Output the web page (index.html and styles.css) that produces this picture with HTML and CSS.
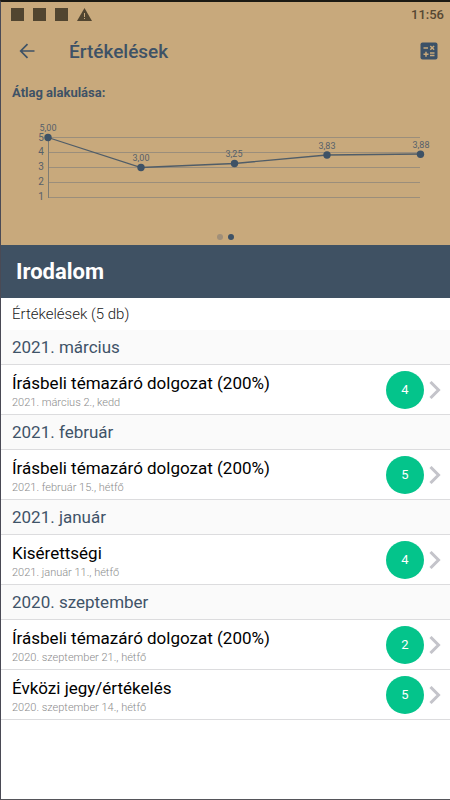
FILE: index.html
```html
<!DOCTYPE html>
<html lang="hu">
<head>
<meta charset="utf-8">
<meta name="viewport" content="width=device-width, initial-scale=1">
<title>Értékelések</title>
<link rel="stylesheet" href="styles.css">
</head>
<body>
<div class="screen">
  <header class="top">
    <div class="status">
      <div class="status-icons">
        <span class="square"></span>
        <span class="square"></span>
        <span class="square"></span>
        <svg class="warning" viewBox="0 0 15 13" aria-hidden="true">
          <path class="warning-shape" d="M7.500 0L15 13H0z"/>
          <path class="warning-mark" d="M7 5h1v4H7zM7 10h1v1H7z"/>
        </svg>
      </div>
      <time class="clock">11:56</time>
    </div>
    <div class="toolbar">
      <button class="icon-button" type="button" aria-label="Vissza">
        <svg class="back" viewBox="0 0 16 16" aria-hidden="true"><path d="M15.500 8H2M8.500 1.200L1.700 8L8.500 14.800"/></svg>
      </button>
      <h1 class="title">Értékelések</h1>
      <button class="icon-button" type="button" aria-label="Átlagszámítás">
        <svg class="calculator" viewBox="0 0 18 18" aria-hidden="true">
          <rect class="calc-body" x="0.500" y="0.500" width="17" height="17" rx="2"/>
          <path class="calc-signs" d="M3.500 6h4.500M10.300 4l3.800 3.800M14.100 4l-3.800 3.800M3.500 12.200h5M6 9.700v5M10 11h4.500M10 13.500h4.500"/>
        </svg>
      </button>
    </div>
    <h2 class="chart-title">Átlag alakulása:</h2>
    <svg class="chart" viewBox="0 0 449 100" role="img" aria-label="Átlag alakulása">
      <path class="grid" d="M47 27.500H419M47 42.500H419M47 57.500H419M47 72.500H419M47 87.500H419"/>
      <path class="axis" d="M47.500 27V88"/>
      <polyline class="line" points="47,27.500 140,57.500 233.500,53.500 326,45 419,44"/>
      <g class="points">
        <circle cx="47" cy="27.500" r="3.700"/><circle cx="140" cy="57.500" r="3.700"/><circle cx="233.500" cy="53.500" r="3.700"/><circle cx="326" cy="45" r="3.700"/><circle cx="419.500" cy="44.300" r="3.700"/>
      </g>
      <g class="ticks">
        <text x="40" y="31">5</text><text x="40" y="45">4</text><text x="40" y="60">3</text><text x="40" y="75">2</text><text x="40" y="90">1</text>
      </g>
      <g class="values">
        <text x="47" y="21">5,00</text><text x="140" y="51">3,00</text><text x="233" y="47">3,25</text><text x="326" y="39">3,83</text><text x="420" y="38">3,88</text>
      </g>
    </svg>
    <div class="pager">
      <span class="dot"></span>
      <span class="dot dot-active"></span>
    </div>
  </header>
  <main>
    <h2 class="subject">Irodalom</h2>
    <p class="count">Értékelések (5 db)</p>

    <h3 class="month">2021. március</h3>
    <a class="entry" href="#">
      <span class="entry-text"><span class="entry-name">Írásbeli témazáró dolgozat (200%)</span><span class="entry-date">2021. március 2., kedd</span></span>
      <span class="grade">4</span>
      <svg class="chevron" viewBox="0 0 12 18" aria-hidden="true"><path d="M1.500 1L9.500 9L1.500 17"/></svg>
    </a>

    <h3 class="month">2021. február</h3>
    <a class="entry" href="#">
      <span class="entry-text"><span class="entry-name">Írásbeli témazáró dolgozat (200%)</span><span class="entry-date">2021. február 15., hétfő</span></span>
      <span class="grade">5</span>
      <svg class="chevron" viewBox="0 0 12 18" aria-hidden="true"><path d="M1.500 1L9.500 9L1.500 17"/></svg>
    </a>

    <h3 class="month">2021. január</h3>
    <a class="entry" href="#">
      <span class="entry-text"><span class="entry-name">Kisérettségi</span><span class="entry-date">2021. január 11., hétfő</span></span>
      <span class="grade">4</span>
      <svg class="chevron" viewBox="0 0 12 18" aria-hidden="true"><path d="M1.500 1L9.500 9L1.500 17"/></svg>
    </a>

    <h3 class="month">2020. szeptember</h3>
    <a class="entry" href="#">
      <span class="entry-text"><span class="entry-name">Írásbeli témazáró dolgozat (200%)</span><span class="entry-date">2020. szeptember 21., hétfő</span></span>
      <span class="grade">2</span>
      <svg class="chevron" viewBox="0 0 12 18" aria-hidden="true"><path d="M1.500 1L9.500 9L1.500 17"/></svg>
    </a>
    <a class="entry" href="#">
      <span class="entry-text"><span class="entry-name">Évközi jegy/értékelés</span><span class="entry-date">2020. szeptember 14., hétfő</span></span>
      <span class="grade">5</span>
      <svg class="chevron" viewBox="0 0 12 18" aria-hidden="true"><path d="M1.500 1L9.500 9L1.500 17"/></svg>
    </a>
  </main>
</div>
</body>
</html>
```
FILE: styles.css
```css
* { box-sizing: border-box; }

body {
  margin: 0;
  background: #fff;
  color: #000;
  font-family: Roboto, "Liberation Sans", sans-serif;
}

h1, h2, h3, p { margin: 0; }

.screen {
  min-height: 100vh;
  border-top: 2px solid #1b1a14;
  border-left: 1px solid #4a4a55;
  border-bottom: 1px solid #55555a;
}

.top {
  background: #c8a97c;
  color: #3e5266;
}

.status {
  display: flex;
  align-items: center;
  justify-content: space-between;
  height: 24px;
  padding: 0 6px 0 10px;
  color: #564833;
}

.status-icons {
  display: flex;
  align-items: center;
  gap: 9px;
}

.square {
  width: 13px;
  height: 13px;
  background: #514530;
}

.warning { width: 15px; height: 13px; }
.warning-shape { fill: #514530; }
.warning-mark { fill: #c8a97c; }
.clock { font-size: 13px; font-weight: 500; }

.toolbar {
  display: flex;
  align-items: center;
  height: 50px;
  padding: 0 12px 0 18px;
}

.icon-button {
  display: flex;
  padding: 0;
  border: 0;
  background: none;
}

.back {
  width: 16px;
  height: 16px;
  fill: none;
  stroke: #3e5266;
  stroke-width: 1.7;
}

.title {
  flex: 1;
  padding-left: 34px;
  font-size: 19px;
  font-weight: 500;
}

.calculator { width: 18px; height: 18px; }
.calc-body { fill: #3b5167; }
.calc-signs { fill: none; stroke: #c8a97c; stroke-width: 1.5; }

.chart-title {
  padding: 8px 11px;
  font-size: 13px;
  line-height: 18px;
  font-weight: 700;
}

.chart { display: block; width: 100%; }
.grid { stroke: #9b8e7b; stroke-width: 1; }
.axis { stroke: #7e7c73; stroke-width: 1; }
.line { fill: none; stroke: #505d68; stroke-width: 1.3; }
.points { fill: #3e5266; }
.ticks, .values { fill: #56606a; text-anchor: middle; }
.ticks { font-size: 10px; }
.values { font-size: 9px; }

.pager {
  display: flex;
  justify-content: center;
  gap: 5px;
  padding: 24px 0 5px;
}

.dot {
  width: 6px;
  height: 6px;
  border-radius: 50%;
  background: #a08f79;
}

.dot-active { background: #3e5266; }

.subject {
  padding: 1px 15px 0;
  background: #3f5163;
  color: #fff;
  font-size: 22px;
  line-height: 52px;
  font-weight: 700;
}

.count {
  padding: 0 11px;
  color: #222;
  font-size: 15px;
  line-height: 32px;
  font-weight: 300;
}

.month {
  padding: 0 11px;
  border-bottom: 1px solid #dcdcde;
  background: #fafafa;
  color: #3f5368;
  font-size: 17px;
  line-height: 34px;
  font-weight: 400;
}

.entry {
  display: flex;
  align-items: center;
  height: 50px;
  padding: 0 9px 0 11px;
  border-bottom: 1px solid #dcdcde;
  color: #000;
  text-decoration: none;
}

.entry-text {
  display: flex;
  flex: 1;
  flex-direction: column;
  gap: 1px;
  padding-top: 3px;
}

.entry-name { font-size: 17px; line-height: 22px; }

.entry-date {
  color: #8c8c8c;
  font-size: 11px;
  line-height: 16px;
  font-weight: 300;
}

.grade {
  width: 38px;
  height: 38px;
  margin-right: 5px;
  border-radius: 50%;
  background: #04c48b;
  color: #fff;
  font-size: 13px;
  line-height: 38px;
  text-align: center;
}

.chevron {
  width: 12px;
  height: 18px;
  fill: none;
  stroke: #c4c4ca;
  stroke-width: 3;
}
```
